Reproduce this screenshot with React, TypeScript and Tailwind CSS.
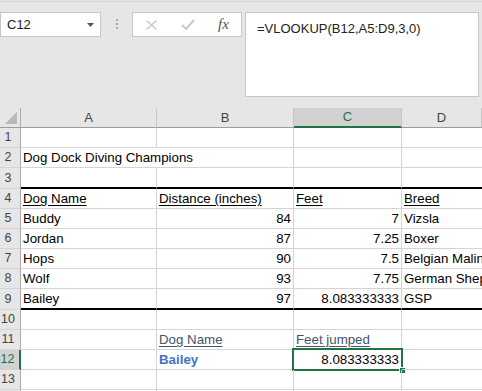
import clsx from "clsx";

type Cell = {
    t?: string;
    right?: boolean;
    cls?: string;
    span?: boolean;
    sel?: boolean;
};

type Row = { n: number; thick?: boolean; cells: Cell[] };

const EMPTY: Cell[] = [{}, {}, {}, {}];

const ROWS: Row[] = [
    { n: 1, cells: EMPTY },
    { n: 2, cells: [{ t: "Dog Dock Diving Champions", span: true }, {}, {}] },
    { n: 3, thick: true, cells: EMPTY },
    {
        n: 4,
        cells: [
            { t: "Dog Name", cls: "underline" },
            { t: "Distance (inches)", cls: "underline" },
            { t: "Feet", cls: "underline" },
            { t: "Breed", cls: "underline" },
        ],
    },
    {
        n: 5,
        cells: [{ t: "Buddy" }, { t: "84", right: true }, { t: "7", right: true }, { t: "Vizsla" }],
    },
    {
        n: 6,
        cells: [{ t: "Jordan" }, { t: "87", right: true }, { t: "7.25", right: true }, { t: "Boxer" }],
    },
    {
        n: 7,
        cells: [{ t: "Hops" }, { t: "90", right: true }, { t: "7.5", right: true }, { t: "Belgian Malinois" }],
    },
    {
        n: 8,
        cells: [{ t: "Wolf" }, { t: "93", right: true }, { t: "7.75", right: true }, { t: "German Shepherd" }],
    },
    {
        n: 9,
        thick: true,
        cells: [{ t: "Bailey" }, { t: "97", right: true }, { t: "8.083333333", right: true }, { t: "GSP" }],
    },
    { n: 10, cells: EMPTY },
    {
        n: 11,
        cells: [
            {},
            { t: "Dog Name", cls: "underline text-[#44546a]" },
            { t: "Feet jumped", cls: "underline text-[#44546a]" },
            {},
        ],
    },
    {
        n: 12,
        cells: [
            {},
            { t: "Bailey", cls: "font-bold text-[#4472c4]" },
            { t: "8.083333333", right: true, sel: true },
            {},
        ],
    },
    { n: 13, cells: EMPTY },
    // only the top edge of row 14 shows, so no label
    { n: 0, cells: EMPTY },
];

const COLS = ["A", "B", "C", "D"];

const FormulaBar = () => (
    <div className="h-[108px] pt-px">
        <div className="h-px bg-[#d4d4d4]" />
        <div className="flex items-start mt-[10px]">
            {/* name box */}
            <div className="relative w-[101px] h-[25px] bg-white border border-[#c6c6c6] flex items-center pl-[6px] text-[13px] text-[#222]">
                C12
                <svg className="absolute right-[6px] top-[10px]" width="7" height="4" viewBox="0 0 7 4">
                    <path d="M0 0 H7 L3.5 4 Z" fill="#555" />
                </svg>
            </div>
            <div className="w-[31px] h-[25px] flex flex-col items-center pt-[7px] gap-[2px]">
                <div className="w-[2px] h-[2px] bg-[#a6a6a6]" />
                <div className="w-[2px] h-[2px] bg-[#a6a6a6]" />
                <div className="w-[2px] h-[2px] bg-[#a6a6a6]" />
            </div>
            {/* cancel / enter / fx */}
            <div className="w-[110px] h-[25px] bg-white border border-[#c6c6c6] flex items-center pl-[13px]">
                <svg width="11" height="10" viewBox="0 0 11 10">
                    <path d="M0.5 0.5 L10.5 9.5 M10.5 0.5 L0.5 9.5" stroke="#c8c8c8" strokeWidth="1.3" />
                </svg>
                <svg className="ml-[24px]" width="14" height="11" viewBox="0 0 14 11">
                    <path d="M1 6 L5 10 L13 1" stroke="#c8c8c8" strokeWidth="2" fill="none" />
                </svg>
                <span className="ml-[23px] font-['Liberation_Serif',serif] italic text-[15px] leading-none text-[#555]">
                    fx
                </span>
            </div>
            <div className="ml-[3px] w-[234px] h-[85px] bg-white border border-[#c6c6c6] pl-[11px] pt-[8px] text-[13px] leading-[15px] text-[#222]">
                =VLOOKUP(B12,A5:D9,3,0)
            </div>
        </div>
    </div>
);

const SheetCell = ({ c, thick, last }: { c: Cell; thick?: boolean; last?: boolean }) => (
    <div
        className={clsx(
            "relative flex items-end px-[2px] pb-[2px] whitespace-nowrap text-[13.3px] leading-[15px] text-black",
            thick ? "h-[21px] border-b-2 border-b-black" : "h-[20px] border-b border-b-[#d4d4d4]",
            !last && "border-r border-r-[#d4d4d4]",
            c.right && "justify-end",
            c.span && "col-span-2",
            last && "overflow-hidden"
        )}
    >
        {c.t && <span className={clsx("underline-offset-2", c.cls)}>{c.t}</span>}
        {c.sel && (
            <>
                <div className="absolute left-[-2px] top-[-2px] right-[-2px] bottom-[-2px] border-2 border-[#217346]" />
                <div className="absolute right-[-5px] bottom-[-5px] w-[7px] h-[7px] bg-[#217346] border border-white" />
            </>
        )}
    </div>
);

const App = () => {
    return (
        <div className="w-[482px] h-[391px] overflow-hidden bg-[#e6e6e6] font-['Liberation_Sans',Arial,sans-serif] select-none">
            <FormulaBar />
            <div className="grid grid-cols-[21px_136px_137px_108px_minmax(0,1fr)] bg-white">
                {/* column headers */}
                <div className="relative h-[20px] bg-[#e6e6e6] border-r border-r-[#ababab] border-b border-b-[#9b9b9b]">
                    <svg className="absolute left-[5px] top-[4px]" width="12" height="12" viewBox="0 0 12 12">
                        <path d="M0 12 H12 V0 Z" fill="#b8b8b8" />
                    </svg>
                </div>
                {COLS.map((col) => (
                    <div
                        key={col}
                        className={clsx(
                            "h-[20px] flex items-center justify-center text-[13px] border-r border-r-[#c6c6c6]",
                            col === "C"
                                ? "bg-[#d2d2d2] text-[#217346] border-b-2 border-b-[#217346]"
                                : "bg-[#e6e6e6] text-[#444] border-b border-b-[#9b9b9b]"
                        )}
                    >
                        {col}
                    </div>
                ))}
                {ROWS.map((row, r) => (
                    <div key={r} className="contents">
                        <div
                            className={clsx(
                                "flex items-center justify-center pr-[4px] text-[12.5px] border-b border-b-[#d4d4d4]",
                                row.thick ? "h-[21px]" : "h-[20px]",
                                row.n === 12
                                    ? "bg-[#d2d2d2] text-[#217346] border-r-2 border-r-[#217346]"
                                    : "bg-[#e6e6e6] text-[#444] border-r border-r-[#ababab]"
                            )}
                        >
                            {row.n > 0 ? row.n : ""}
                        </div>
                        {row.cells.map((c, i) => (
                            <SheetCell key={i} c={c} thick={row.thick} last={i === row.cells.length - 1} />
                        ))}
                    </div>
                ))}
            </div>
        </div>
    );
};

export default App;
